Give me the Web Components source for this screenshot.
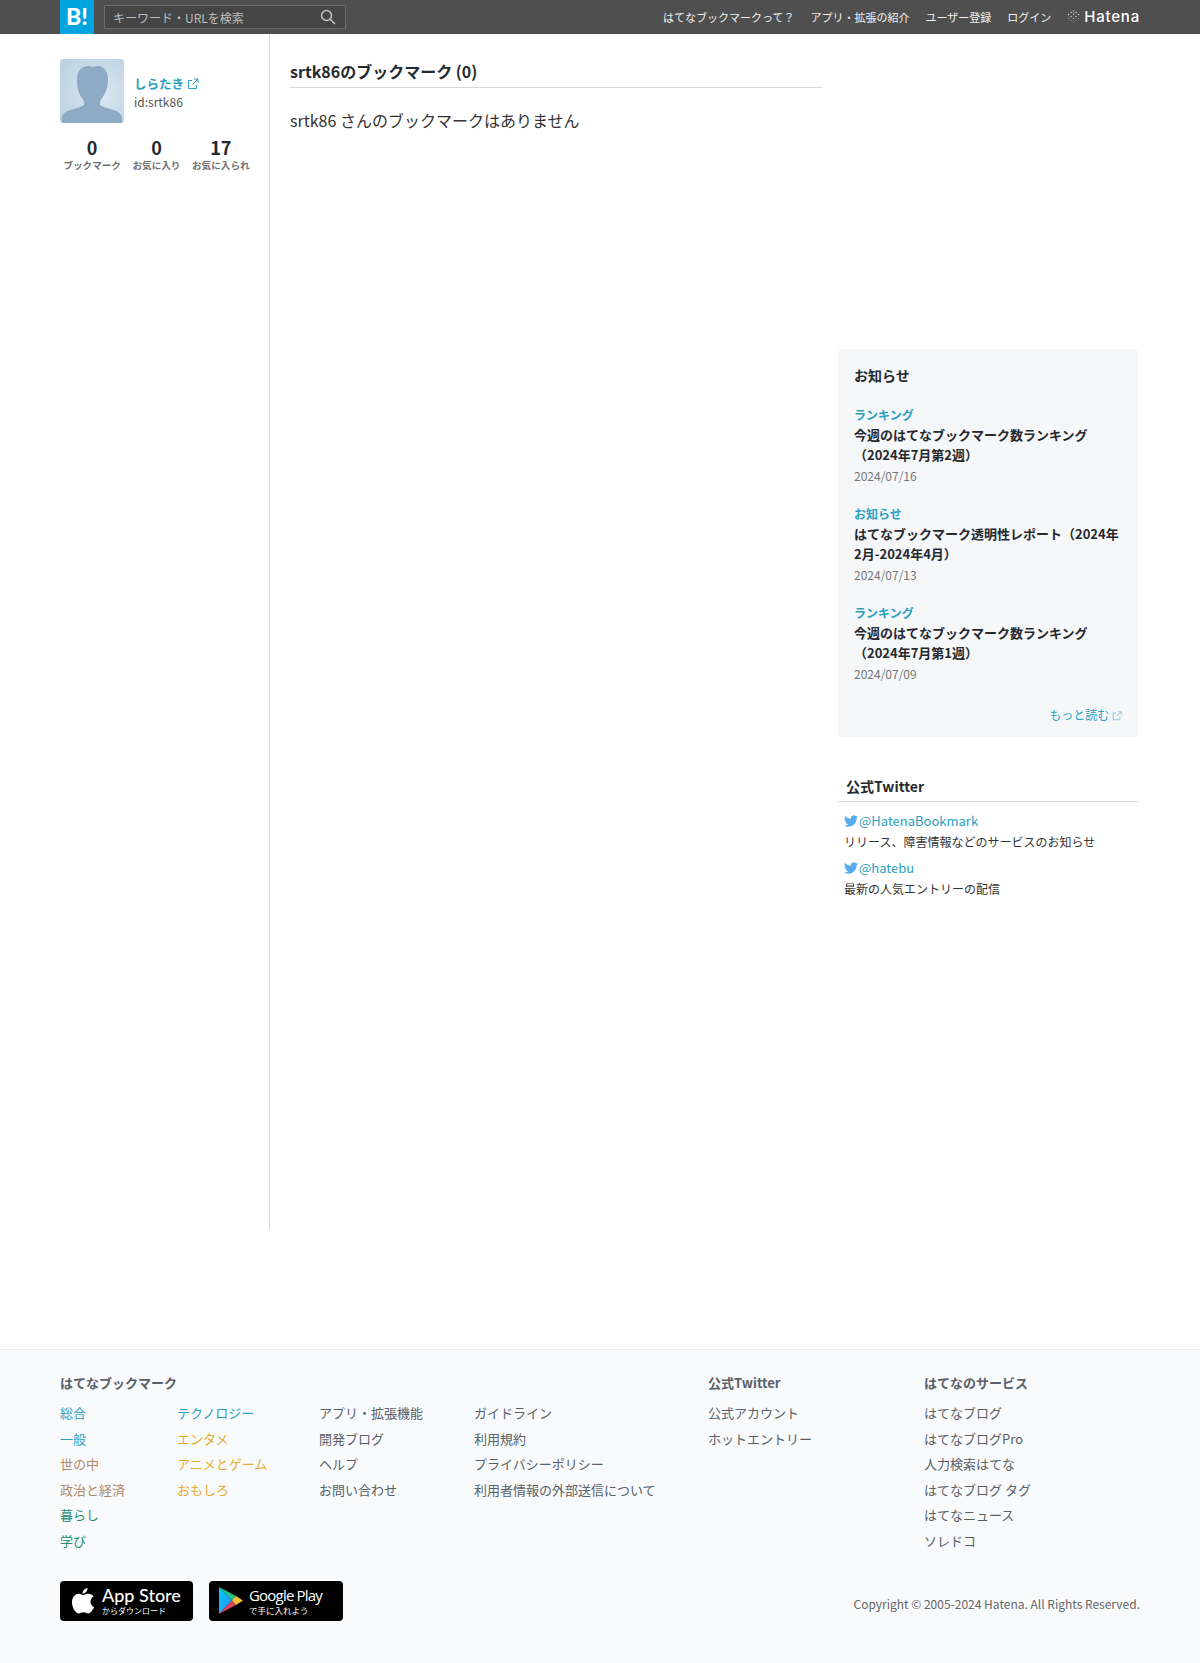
<!DOCTYPE html>
<html lang="ja">
<head>
<meta charset="utf-8">
<title>srtk86のブックマーク</title>
<style>
  html, body { margin: 0; padding: 0; }
  body {
    background: #fff;
    color: #25292e;
    font-family: "Noto Sans CJK JP", "Noto Sans", sans-serif;
  }
</style>
</head>
<body>
<hb-header></hb-header>
<hb-page>
  <hb-profile slot="side"></hb-profile>
  <hb-empty slot="main"></hb-empty>
  <hb-notices slot="aside"></hb-notices>
  <hb-twitter slot="aside"></hb-twitter>
</hb-page>
<hb-footer></hb-footer>

<script>
const EXT_ICON = (color, size) => `
  <svg width="${size}" height="${size}" viewBox="0 0 12 12" fill="none" stroke="${color}" stroke-width="1" style="vertical-align:-1px">
    <path d="M9.500 7v3.500h-8v-8H5"/>
    <path d="M7 1h4v4M11 1L5.500 6.500"/>
  </svg>`;

class HbHeader extends HTMLElement {
  constructor() {
    super();
    this.attachShadow({ mode: 'open' });
  }

  connectedCallback() {
    const links = ['はてなブックマークって？', 'アプリ・拡張の紹介', 'ユーザー登録', 'ログイン'];
    this.shadowRoot.innerHTML = `
      <style>
        :host { display: block; background: #4f4f4f; height: 34px; }
        .inner { width: 1080px; margin-left: 60px; height: 34px; display: flex; align-items: center; }
        .logo {
          width: 34px; height: 34px; background: #00a4de; color: #fff;
          font: 900 23px/33px "Lato", sans-serif; text-align: center;
        }
        .search {
          margin-left: 10px; height: 22px; border: 1px solid #6c6c6c;
          background: #454545; display: flex; align-items: center; justify-content: space-between;
          padding: 0 9px 0 8px; border-radius: 1px; width: 223px;
          font-size: 12px; color: #bdbdbd;
        }
        nav { margin-left: auto; display: flex; align-items: center; font-size: 11px; color: #f2f2f2; }
        nav a { margin-right: 16px; }
        .hatena { display: flex; align-items: center; gap: 4px; font: 500 15px/34px "Inter", sans-serif; letter-spacing: .8px; color: #fff; }
        .hatena svg { margin-top: -2px; }
      </style>
      <div class="inner">
        <div class="logo">B!</div>
        <div class="search">
          <span>キーワード・URLを検索</span>
          <svg width="16" height="16" viewBox="0 0 16 16" fill="none" stroke="#c4c4c4" stroke-width="1.500">
            <circle cx="6.500" cy="6.500" r="5"/><path d="M10.200 10.200L15 15"/>
          </svg>
        </div>
        <nav>
          ${links.map((l) => `<a>${l}</a>`).join('')}
          <span class="hatena">
            <svg width="13" height="13" viewBox="0 0 13 13" fill="#dcdcdc">
              <circle cx="6.500" cy="1" r=".7"/><circle cx="4" cy="2.500" r=".7"/><circle cx="9" cy="2.500" r=".7"/>
              <circle cx="1.500" cy="4.500" r=".7"/><circle cx="6.500" cy="4" r=".7"/><circle cx="11.500" cy="4.500" r=".7"/>
              <circle cx="4" cy="6.500" r=".7"/><circle cx="9" cy="6.500" r=".7"/><circle cx="1.500" cy="8.500" r=".6" opacity=".7"/>
              <circle cx="6.500" cy="8.500" r=".6"/><circle cx="11.500" cy="8.500" r=".6" opacity=".7"/><circle cx="4" cy="10.500" r=".5" opacity=".6"/>
              <circle cx="9" cy="10.500" r=".5" opacity=".6"/><circle cx="6.500" cy="12" r=".5" opacity=".5"/>
            </svg>
            Hatena
          </span>
        </nav>
      </div>
    `;
  }
}

class HbPage extends HTMLElement {
  constructor() {
    super();
    this.attachShadow({ mode: 'open' });
  }

  connectedCallback() {
    this.shadowRoot.innerHTML = `
      <style>
        :host { display: block; }
        .wrap { display: flex; height: 1195px; margin-left: 60px; width: 1080px; }
        .side { width: 209px; border-right: 1px solid #d8d8d8; flex: none; }
        .main { width: 532px; margin-left: 20px; flex: none; }
        .aside { width: 300px; margin-left: 16px; padding-top: 315px; flex: none; }
      </style>
      <div class="wrap">
        <div class="side"><slot name="side"></slot></div>
        <div class="main"><slot name="main"></slot></div>
        <div class="aside"><slot name="aside"></slot></div>
      </div>
    `;
  }
}

class HbProfile extends HTMLElement {
  constructor() {
    super();
    this.attachShadow({ mode: 'open' });
  }

  connectedCallback() {
    const stats = [['0', 'ブックマーク'], ['0', 'お気に入り'], ['17', 'お気に入られ']];
    this.shadowRoot.innerHTML = `
      <style>
        :host { display: block; padding-top: 25px; }
        .who { display: flex; align-items: center; gap: 10px; }
        .avatar { width: 64px; height: 64px; border-radius: 3px; overflow: hidden; flex: none; display: block; }
        .name { font-size: 12.500px; font-weight: 700; color: #2a9fc2; line-height: 18px; margin-top: 3px; }
        .id { font-size: 12px; color: #555; line-height: 18px; }
        .stats { display: flex; width: 193px; margin-top: 13px; }
        .stat { flex: 1 1 0; text-align: center; }
        .num { font-size: 18px; font-weight: 700; line-height: 23px; color: #25292e; }
        .label { font-size: 9.600px; font-weight: 700; line-height: 13px; color: #707070; white-space: nowrap; }
      </style>
      <div class="who">
        <svg class="avatar" viewBox="0 0 64 64">
          <defs>
            <radialGradient id="bg" cx=".62" cy=".55" r=".7">
              <stop offset="0" stop-color="#dbe8f1"/><stop offset="1" stop-color="#bed3e2"/>
            </radialGradient>
          </defs>
          <rect width="64" height="64" fill="url(#bg)"/>
          <path fill="#8eaac4" d="M32.500 8c-2-1-6-1.500-9 0C19 10 17 15 17 21c0 7 1 13 5 18 2 2.500 2 4 2 6 0 2-4 3-7 4-7 2-13 3-15 9-.5 2 0 4 0 6h60c0-2 .5-4 0-6-2-6-8-7-15-9-3-1-7-2-7-4 0-2 0-3.500 2-6 4-5 6-11 6-18 0-6-2-11-6-13-3-1.500-7-1-9.500 0z"/>
        </svg>
        <div>
          <div class="name">しらたき ${EXT_ICON('#2a9fc2', 12)}</div>
          <div class="id">id:srtk86</div>
        </div>
      </div>
      <div class="stats">
        ${stats.map(([n, l]) => `<div class="stat"><div class="num">${n}</div><div class="label">${l}</div></div>`).join('')}
      </div>
    `;
  }
}

class HbEmpty extends HTMLElement {
  constructor() {
    super();
    this.attachShadow({ mode: 'open' });
  }

  connectedCallback() {
    this.shadowRoot.innerHTML = `
      <style>
        :host { display: block; padding-top: 25px; }
        h2 {
          margin: 0; font-size: 16px; font-weight: 700; line-height: 24px; color: #25292e;
          padding: 0 0 4px 0; border-bottom: 1px solid #d8d8d8;
        }
        p { margin: 20px 0 0; font-size: 16px; line-height: 24px; color: #333; }
      </style>
      <h2>srtk86のブックマーク (0)</h2>
      <p>srtk86 さんのブックマークはありません</p>
    `;
  }
}

class HbNotices extends HTMLElement {
  constructor() {
    super();
    this.attachShadow({ mode: 'open' });
  }

  connectedCallback() {
    const items = [
      ['ランキング', '今週のはてなブックマーク数ランキング<br>（2024年7月第2週）', '2024/07/16'],
      ['お知らせ', 'はてなブックマーク透明性レポート（2024年2月-2024年4月）', '2024/07/13'],
      ['ランキング', '今週のはてなブックマーク数ランキング<br>（2024年7月第1週）', '2024/07/09'],
    ];
    this.shadowRoot.innerHTML = `
      <style>
        :host { display: block; background: #f5f7f9; border-radius: 4px; padding: 16px 16px 14px; height: 388px; box-sizing: border-box; }
        h3 { margin: 0 0 20px; font-size: 14px; line-height: 20px; font-weight: 700; color: #25292e; }
        .item { margin-bottom: 18px; }
        .cat { font-size: 12px; font-weight: 700; line-height: 20px; color: #2a9fc2; }
        .title { font-size: 13px; font-weight: 700; line-height: 20px; color: #25292e; }
        .date { font-size: 12px; line-height: 20px; color: #777; margin-top: 1px; }
        .more { text-align: right; font-size: 12px; line-height: 20px; color: #2a9fc2; margin-top: 21px; }
      </style>
      <h3>お知らせ</h3>
      ${items.map(([c, t, d]) => `
        <div class="item">
          <div class="cat">${c}</div>
          <div class="title">${t}</div>
          <div class="date">${d}</div>
        </div>`).join('')}
      <div class="more">もっと読む ${EXT_ICON('#7fbdd2', 10)}</div>
    `;
  }
}

class HbTwitter extends HTMLElement {
  constructor() {
    super();
    this.attachShadow({ mode: 'open' });
  }

  connectedCallback() {
    const bird = `<svg width="14" height="14" viewBox="0 0 24 24" fill="#55acee" style="vertical-align:-2px;margin-right:1px"><path d="M23.950 4.570a10 10 0 0 1-2.830.78 4.960 4.960 0 0 0 2.170-2.720c-.95.56-2 .96-3.130 1.190a4.920 4.920 0 0 0-8.380 4.480C7.690 8.100 4.070 6.130 1.640 3.160a4.820 4.820 0 0 0-.66 2.470c0 1.710.87 3.210 2.190 4.100a4.900 4.900 0 0 1-2.230-.62v.06a4.920 4.920 0 0 0 3.950 4.830 5 5 0 0 1-2.210.08 4.940 4.940 0 0 0 4.600 3.420A9.870 9.870 0 0 1 0 19.540a14 14 0 0 0 7.560 2.210c9.050 0 14-7.500 14-13.980 0-.21 0-.42-.02-.63a9.940 9.940 0 0 0 2.410-2.570z"/></svg>`;
    this.shadowRoot.innerHTML = `
      <style>
        :host { display: block; margin-top: 37px; font-size: 12px; }
        h3 { margin: 0; padding: 0 0 3px 8px; font-size: 14px; font-weight: 700; line-height: 24px; color: #25292e; border-bottom: 1px solid #d8d8d8; }
        .list { padding: 9px 0 0 6px; }
        .acc { font-size: 13px; line-height: 20px; color: #2a9fc2; }
        .desc { line-height: 21px; color: #333; margin-bottom: 6px; }
      </style>
      <h3>公式Twitter</h3>
      <div class="list">
        <div class="acc">${bird}@HatenaBookmark</div>
        <div class="desc">リリース、障害情報などのサービスのお知らせ</div>
        <div class="acc">${bird}@hatebu</div>
        <div class="desc">最新の人気エントリーの配信</div>
      </div>
    `;
  }
}

class HbFooter extends HTMLElement {
  constructor() {
    super();
    this.attachShadow({ mode: 'open' });
  }

  connectedCallback() {
    const colList = (arr, width) => `
      <ul style="width:${width}px">
        ${arr.map(([t, c]) => `<li style="color:${c || '#5a6066'}">${t}</li>`).join('')}
      </ul>`;
    const blue = '#2a9fc2', brown = '#b08a68', green = '#1f8f6f', yellow = '#e8ab2e';
    this.shadowRoot.innerHTML = `
      <style>
        :host { display: block; margin-top: 120px; background: #f8fafc; border-top: 1px solid #ececec; height: 314px; box-sizing: border-box; }
        .inner { width: 1080px; margin-left: 60px; }
        .cols { display: flex; padding-top: 23px; }
        .group { flex: none; }
        h4 { margin: 0 0 10px; font-size: 13px; line-height: 20px; font-weight: 700; color: #5a6066; }
        .lists { display: flex; }
        ul { list-style: none; margin: 0; padding: 0; font-size: 13px; flex: none; }
        li { line-height: 20px; margin-bottom: 5.600px; white-space: nowrap; }
        .bottom { display: flex; justify-content: space-between; align-items: center; margin-top: 24px; }
        .badges { display: flex; gap: 16px; }
        .badge {
          height: 40px; background: #000; border-radius: 4px; color: #fff;
          display: flex; align-items: center; box-sizing: border-box;
        }
        .badge .big { font: 500 18px/20px "Lato", sans-serif; white-space: nowrap; }
        .badge .small { font-size: 8px; line-height: 11px; white-space: nowrap; }
        .copy { font-size: 12px; color: #666; margin-top: 6px; }
      </style>
      <div class="inner">
        <div class="cols">
          <div class="group" style="width:648px">
            <h4>はてなブックマーク</h4>
            <div class="lists">
              ${colList([['総合', blue], ['一般', blue], ['世の中', brown], ['政治と経済', brown], ['暮らし', green], ['学び', green]], 117)}
              ${colList([['テクノロジー', blue], ['エンタメ', yellow], ['アニメとゲーム', yellow], ['おもしろ', yellow]], 142)}
              ${colList([['アプリ・拡張機能'], ['開発ブログ'], ['ヘルプ'], ['お問い合わせ']], 155)}
              ${colList([['ガイドライン'], ['利用規約'], ['プライバシーポリシー'], ['利用者情報の外部送信について']], 234)}
            </div>
          </div>
          <div class="group" style="width:216px">
            <h4>公式Twitter</h4>
            ${colList([['公式アカウント'], ['ホットエントリー']], 216)}
          </div>
          <div class="group" style="width:216px">
            <h4>はてなのサービス</h4>
            ${colList([['はてなブログ'], ['はてなブログPro'], ['人力検索はてな'], ['はてなブログ タグ'], ['はてなニュース'], ['ソレドコ']], 216)}
          </div>
        </div>
        <div class="bottom">
          <div class="badges">
            <div class="badge" style="width:133px;padding-left:12px;gap:8px">
              <svg width="22" height="26" viewBox="0 0 22 26" fill="#fff">
                <path d="M15.500 0c.2 2.800-2.300 5.600-5 5.500C10.200 2.900 13 .2 15.500 0z"/>
                <path d="M11 7c1.500 0 3-1.300 5.300-1.300 2 0 4 1 5.200 2.800-4.400 2.600-3.700 8.700.5 10.500-1 2.700-3.500 6.500-5.700 6.500-1.800 0-2.600-1.200-4.700-1.200-2.200 0-3 1.200-4.800 1.200C3.500 25.500 0 19.500 0 14.500 0 9.200 3.300 5.800 6.800 5.800 8.500 5.800 10 7 11 7z"/>
              </svg>
              <div><div class="big">App Store</div><div class="small">からダウンロード</div></div>
            </div>
            <div class="badge" style="width:134px;padding-left:10px;gap:6px">
              <svg width="24" height="27" viewBox="0 0 24 27">
                <defs><linearGradient id="gp" x1="0" y1="0" x2="1" y2="1"><stop offset="0" stop-color="#00d0ff"/><stop offset="1" stop-color="#2f86e8"/></linearGradient></defs>
                <path fill="url(#gp)" d="M0 0v27l13-13.500z"/>
                <path fill="#27c28a" d="M0 0l13 13.500 4-4.500z"/>
                <path fill="#d9455f" d="M0 27l13-13.500 4 4.500z"/>
                <path fill="#f8c22e" d="M13 13.500L17 9l7 4.500-7 4.500z"/>
              </svg>
              <div><div class="big" style="font-size:15px;font-family:'Open Sans',sans-serif;letter-spacing:-.8px">Google Play</div><div class="small" style="font-size:8.500px">で手に入れよう</div></div>
            </div>
          </div>
          <div class="copy">Copyright © 2005-2024 Hatena. All Rights Reserved.</div>
        </div>
      </div>
    `;
  }
}

customElements.define('hb-header', HbHeader);
customElements.define('hb-page', HbPage);
customElements.define('hb-profile', HbProfile);
customElements.define('hb-empty', HbEmpty);
customElements.define('hb-notices', HbNotices);
customElements.define('hb-twitter', HbTwitter);
customElements.define('hb-footer', HbFooter);
</script>
</body>
</html>
